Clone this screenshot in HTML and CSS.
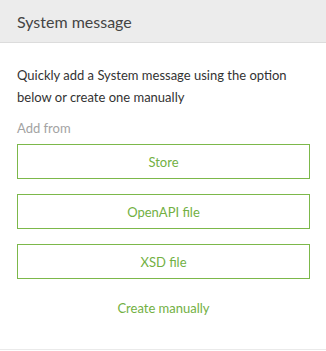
FILE: index.html
```html
<!DOCTYPE html>
<html lang="en">
<head>
    <meta charset="UTF-8">
    <meta name="viewport" content="width=device-width, initial-scale=1.0">
    <title>System message</title>
    <link rel="stylesheet" href="styles.css">
</head>
<body>
    <div class="panel">
        <div class="panel-header">
            <h2>System message</h2>
        </div>

        <div class="panel-body">
            <p class="intro">Quickly add a System message using the option below or create one manually</p>
            <div class="add-from">Add from</div>

            <div class="options">
                <button type="button" class="option-btn">Store</button>
                <button type="button" class="option-btn">OpenAPI file</button>
                <button type="button" class="option-btn">XSD file</button>
            </div>

            <a href="#" class="create-link">Create manually</a>
        </div>
    </div>
</body>
</html>
```

FILE: styles.css
```css
body {
    font-family: Lato, 'Open Sans', sans-serif;
    color: #333;
    margin: 0;
    background-color: white;
}

.panel {
    width: 326px;
    height: 350px;
    border-bottom: 1px solid #eaeaea;
    box-sizing: border-box;
}

.panel-header {
    background-color: #ececec;
    border-bottom: 1px solid #dcdcdc;
    height: 42px;
    padding: 0 17px;
    display: flex;
    align-items: center;
}

.panel-header h2 {
    margin: 0;
    font-size: 16px;
    font-weight: normal;
    color: #444;
}

.panel-body {
    padding: 21px 16px 0 17px;
}

.intro {
    margin: 0;
    font-size: 13px;
    line-height: 22px;
}

.add-from {
    color: #a3a3a3;
    font-size: 13px;
    line-height: 22px;
    margin-top: 9px;
}

.options {
    display: flex;
    flex-direction: column;
    gap: 15px;
    margin-top: 5px;
}

.option-btn {
    font-family: inherit;
    background-color: white;
    border: 1px solid #7cb84a;
    color: #72b043;
    height: 35px;
    font-size: 13px;
    cursor: pointer;
    width: 100%;
}

.create-link {
    display: block;
    text-align: center;
    color: #72b043;
    text-decoration: none;
    font-size: 13px;
    margin-top: 21px;
}
```
